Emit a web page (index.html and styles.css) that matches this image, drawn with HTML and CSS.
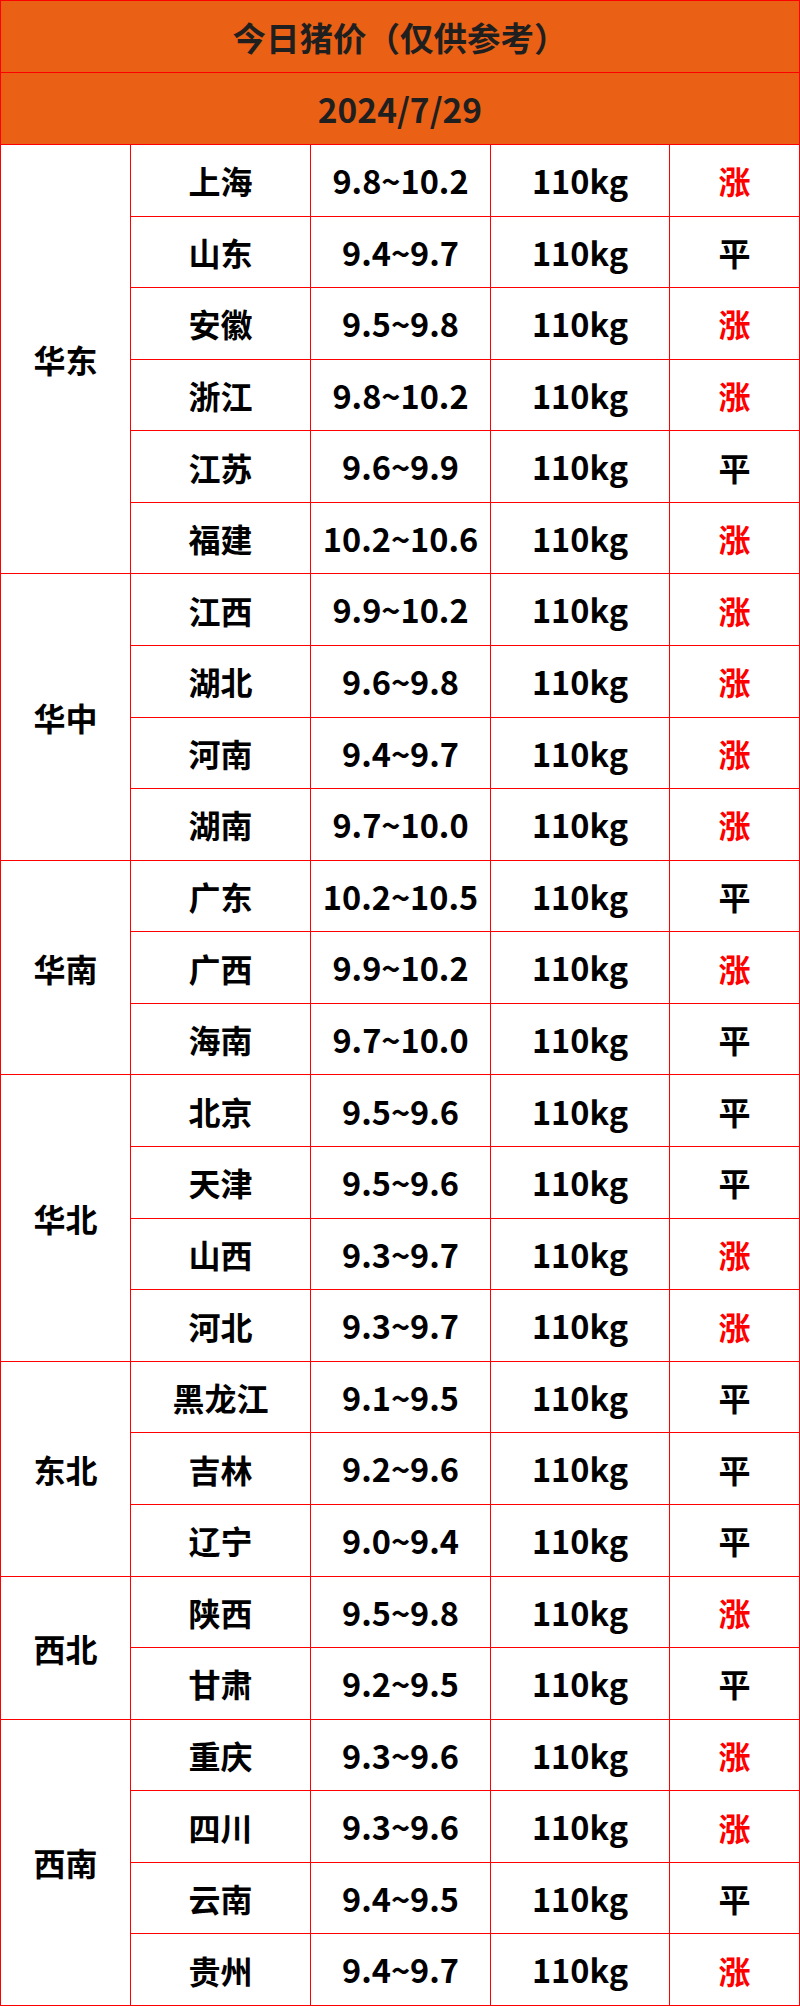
FILE: index.html
```html
<!DOCTYPE html>
<html lang="zh-CN">
<head>
<meta charset="utf-8">
<title>今日猪价</title>
<link rel="stylesheet" href="styles.css">
</head>
<body>
<div class="sheet">
  <div class="cell head">今日猪价（仅供参考）</div>
  <div class="cell head">2024/7/29</div>

  <div class="cell region span6">华东</div>
  <div class="cell">上海</div><div class="cell num">9.8~10.2</div><div class="cell num">110kg</div><div class="cell up">涨</div>
  <div class="cell">山东</div><div class="cell num">9.4~9.7</div><div class="cell num">110kg</div><div class="cell">平</div>
  <div class="cell">安徽</div><div class="cell num">9.5~9.8</div><div class="cell num">110kg</div><div class="cell up">涨</div>
  <div class="cell">浙江</div><div class="cell num">9.8~10.2</div><div class="cell num">110kg</div><div class="cell up">涨</div>
  <div class="cell">江苏</div><div class="cell num">9.6~9.9</div><div class="cell num">110kg</div><div class="cell">平</div>
  <div class="cell">福建</div><div class="cell num">10.2~10.6</div><div class="cell num">110kg</div><div class="cell up">涨</div>

  <div class="cell region span4">华中</div>
  <div class="cell">江西</div><div class="cell num">9.9~10.2</div><div class="cell num">110kg</div><div class="cell up">涨</div>
  <div class="cell">湖北</div><div class="cell num">9.6~9.8</div><div class="cell num">110kg</div><div class="cell up">涨</div>
  <div class="cell">河南</div><div class="cell num">9.4~9.7</div><div class="cell num">110kg</div><div class="cell up">涨</div>
  <div class="cell">湖南</div><div class="cell num">9.7~10.0</div><div class="cell num">110kg</div><div class="cell up">涨</div>

  <div class="cell region span3">华南</div>
  <div class="cell">广东</div><div class="cell num">10.2~10.5</div><div class="cell num">110kg</div><div class="cell">平</div>
  <div class="cell">广西</div><div class="cell num">9.9~10.2</div><div class="cell num">110kg</div><div class="cell up">涨</div>
  <div class="cell">海南</div><div class="cell num">9.7~10.0</div><div class="cell num">110kg</div><div class="cell">平</div>

  <div class="cell region span4">华北</div>
  <div class="cell">北京</div><div class="cell num">9.5~9.6</div><div class="cell num">110kg</div><div class="cell">平</div>
  <div class="cell">天津</div><div class="cell num">9.5~9.6</div><div class="cell num">110kg</div><div class="cell">平</div>
  <div class="cell">山西</div><div class="cell num">9.3~9.7</div><div class="cell num">110kg</div><div class="cell up">涨</div>
  <div class="cell">河北</div><div class="cell num">9.3~9.7</div><div class="cell num">110kg</div><div class="cell up">涨</div>

  <div class="cell region span3">东北</div>
  <div class="cell">黑龙江</div><div class="cell num">9.1~9.5</div><div class="cell num">110kg</div><div class="cell">平</div>
  <div class="cell">吉林</div><div class="cell num">9.2~9.6</div><div class="cell num">110kg</div><div class="cell">平</div>
  <div class="cell">辽宁</div><div class="cell num">9.0~9.4</div><div class="cell num">110kg</div><div class="cell">平</div>

  <div class="cell region span2">西北</div>
  <div class="cell">陕西</div><div class="cell num">9.5~9.8</div><div class="cell num">110kg</div><div class="cell up">涨</div>
  <div class="cell">甘肃</div><div class="cell num">9.2~9.5</div><div class="cell num">110kg</div><div class="cell">平</div>

  <div class="cell region span4">西南</div>
  <div class="cell">重庆</div><div class="cell num">9.3~9.6</div><div class="cell num">110kg</div><div class="cell up">涨</div>
  <div class="cell">四川</div><div class="cell num">9.3~9.6</div><div class="cell num">110kg</div><div class="cell up">涨</div>
  <div class="cell">云南</div><div class="cell num">9.4~9.5</div><div class="cell num">110kg</div><div class="cell">平</div>
  <div class="cell">贵州</div><div class="cell num">9.4~9.7</div><div class="cell num">110kg</div><div class="cell up">涨</div>
</div>
</body>
</html>
```
FILE: styles.css
```css
html, body {
  margin: 0;
  padding: 0;
  background: #ffffff;
}
body {
  font-family: "Noto Sans CJK SC", "Noto Sans", sans-serif;
  color: #000;
}
.sheet {
  box-sizing: border-box;
  width: 800px;
  height: 2006px;
  display: grid;
  grid-template-columns: 130px 180px 180px 179px 1fr;
  grid-template-rows: 72px 72px repeat(26, 1fr);
  border-top: 1px solid #ff0000;
  border-left: 1px solid #ff0000;
}
.cell {
  box-sizing: border-box;
  display: flex;
  align-items: center;
  justify-content: center;
  border-right: 1px solid #ff0000;
  border-bottom: 1px solid #ff0000;
  font-size: 32px;
  font-weight: 700;
  line-height: 1;
  min-width: 0;
  min-height: 0;
}
.head {
  grid-column: 1 / -1;
  background: #ea6115;
  color: #1f1f1f;
  font-size: 33.5px;
}
.region { grid-column: 1; }
.span6 { grid-row: span 6; }
.span4 { grid-row: span 4; }
.span3 { grid-row: span 3; }
.span2 { grid-row: span 2; }
.num {
  font-size: 32.5px;
}
.up {
  color: #ff0000;
}
```
